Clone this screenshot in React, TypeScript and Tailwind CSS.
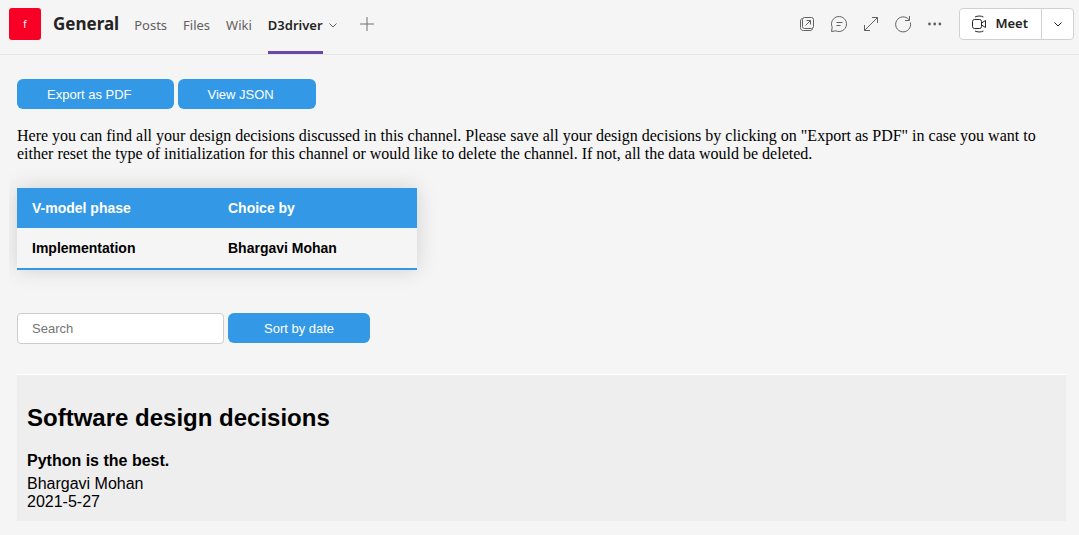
import type { ReactNode } from "react";

const tabs = ["Posts", "Files", "Wiki"];

const rows = [{ phase: "Implementation", by: "Bhargavi Mohan" }];

const decisions = [
  { title: "Python is the best.", author: "Bhargavi Mohan", date: "2021-5-27" },
];

function Chevron() {
  return (
    <svg width="10" height="10" viewBox="0 0 10 10" fill="none" stroke="currentColor" aria-hidden="true">
      <path d="M1.500 3.500L5 7l3.500-3.500" />
    </svg>
  );
}

function IconButton({ label, children }: { label: string; children: ReactNode }) {
  return (
    <button type="button" aria-label={label} className="flex size-8 items-center justify-center text-[#616161]">
      <svg width="18" height="18" viewBox="0 0 18 18" fill="none" stroke="currentColor" aria-hidden="true">
        {children}
      </svg>
    </button>
  );
}

function Header() {
  return (
    <header className="flex h-[55px] border-b border-[#e6e6e6] pr-[5px] pl-[9px] font-['Noto_Sans','Open_Sans',sans-serif]">
      <div className="mt-2 flex size-8 shrink-0 items-center justify-center rounded-[3px] bg-[#f80025] text-[10px] text-white">
        f
      </div>
      <h1 className="ml-3 pt-3 text-[17px] leading-6 font-bold text-[#242424]">General</h1>
      <nav className="ml-[15px] flex text-[13px] text-[#616161]">
        <div className="flex gap-4 pt-[15px] leading-5">
          {tabs.map((tab) => (
            <a key={tab} href="#">
              {tab}
            </a>
          ))}
        </div>
        <a
          href="#"
          aria-current="page"
          className="ml-4 border-b-[3px] border-[#6b47ab] pt-[15px] leading-5 font-semibold text-[#242424]"
        >
          D3driver
        </a>
        <button type="button" aria-label="Tab options" className="ml-[5px] flex h-[50px] items-center">
          <Chevron />
        </button>
        <button type="button" aria-label="Add a tab" className="ml-[11px] flex h-12 w-9 items-center justify-center text-[#717171]">
          <svg width="16" height="16" viewBox="0 0 16 16" fill="none" stroke="currentColor" aria-hidden="true">
            <path d="M8 1v14M1 8h14" />
          </svg>
        </button>
      </nav>
      <div className="ml-auto flex h-12 items-center">
        <IconButton label="Pop out tab">
          <rect x="4.500" y="2.500" width="11" height="11" rx="2" />
          <path d="M4.500 3.500C3 3.800 2.500 4.700 2.500 6v6.500c0 2 1 3 3 3H12c1.300 0 2.200-.500 2.500-2M7.500 10.500l5-5M8.500 5.500h4v4" />
        </IconButton>
        <IconButton label="Show tab conversation">
          <path d="M1.500 16.500l.700-4.300A7.500 7.500 0 1 1 5.800 15.800zM6.500 7.500h6M6.500 10.500h4" />
        </IconButton>
        <IconButton label="Expand tab">
          <path d="M2.500 15.500l13-13M10 2.500h5.500V8M2.500 10v5.500H8" />
        </IconButton>
        <IconButton label="Reload tab">
          <path d="M16.400 7.500A7.500 7.500 0 1 1 15 4.700M15.500 1v4.500H11" />
        </IconButton>
        <IconButton label="More options">
          <g fill="currentColor" stroke="none">
            <circle cx="3.500" cy="9" r="1.400" />
            <circle cx="8.700" cy="9" r="1.400" />
            <circle cx="13.900" cy="9" r="1.400" />
          </g>
        </IconButton>
        <div className="ml-2 flex h-8 rounded-[4px] border border-[#d1d1d1] bg-white text-[#242424]">
          <button type="button" className="flex items-center gap-[7px] pr-[13px] pl-[11px] text-[13px] font-semibold">
            <svg width="17" height="18" viewBox="0 0 17 18" fill="none" stroke="currentColor" aria-hidden="true">
              <rect x="1.500" y="4.500" width="9" height="9" rx="2" />
              <path d="M10.500 8l4-2.500v7l-4-2.500M4 2c2.200-1.300 6.200-1.300 8.400 0M4 16c2.200 1.300 6.200 1.300 8.400 0" />
            </svg>
            Meet
          </button>
          <button type="button" aria-label="Meeting options" className="flex w-8 items-center justify-center border-l border-[#d1d1d1]">
            <Chevron />
          </button>
        </div>
      </div>
    </header>
  );
}

export default function App() {
  return (
    <div className="min-h-screen bg-[#f5f5f5]">
      <Header />
      <main className="ml-[9px] overflow-hidden pt-6 pr-[13px] pb-3.5 pl-2 font-['Liberation_Sans',Arial,sans-serif] text-black">
        <div className="flex gap-1 text-[13px] text-white">
          <button type="button" className="h-[30px] rounded-[6px] bg-[#3399e6] pt-0.5 pr-[42px] pl-[30px]">
            Export as PDF
          </button>
          <button type="button" className="h-[30px] rounded-[6px] bg-[#3399e6] pt-0.5 pr-[42px] pl-[30px]">
            View JSON
          </button>
        </div>
        <p className="mt-[18px] font-['Liberation_Serif',serif] text-[16px] leading-[18px]">
          Here you can find all your design decisions discussed in this channel. Please save all your design decisions
          by clicking on "Export as PDF" in case you want to either reset the type of initialization for this channel or
          would like to delete the channel. If not, all the data would be deleted.
        </p>
        <table className="mt-[25px] w-[400px] table-fixed border-collapse text-left text-[14px] leading-4 font-bold shadow-[0_0_20px_rgba(0,0,0,0.15)]">
          <thead>
            <tr className="bg-[#3399e6] text-white">
              <th className="w-[196px] px-[15px] py-3">V-model phase</th>
              <th className="px-[15px] py-3">Choice by</th>
            </tr>
          </thead>
          <tbody>
            {rows.map((row) => (
              <tr key={row.phase} className="border-b-2 border-[#3399e6]">
                <td className="px-[15px] py-3">{row.phase}</td>
                <td className="px-[15px] py-3">{row.by}</td>
              </tr>
            ))}
          </tbody>
        </table>
        <div className="mt-[43px] flex gap-1 text-[13px]">
          <input
            type="search"
            aria-label="Search"
            placeholder="Search"
            className="h-[31px] w-[207px] rounded-[4px] border border-[#cccccc] bg-white px-3.5 placeholder:text-[#757575]"
          />
          <button type="button" className="h-[30px] rounded-[6px] bg-[#3399e6] px-9 pt-0.5 text-white">
            Sort by date
          </button>
        </div>
        <section className="mt-[30px] border-t border-white bg-[#eeeeee] px-2.5 pt-[29px] pb-2.5 text-[16px] leading-[18px]">
          <h2 className="text-[24px] leading-7 font-bold">Software design decisions</h2>
          {decisions.map((decision) => (
            <article key={decision.title} className="mt-5">
              <h3 className="mb-[5px] font-bold">{decision.title}</h3>
              <p>{decision.author}</p>
              <p>{decision.date}</p>
            </article>
          ))}
        </section>
      </main>
    </div>
  );
}
